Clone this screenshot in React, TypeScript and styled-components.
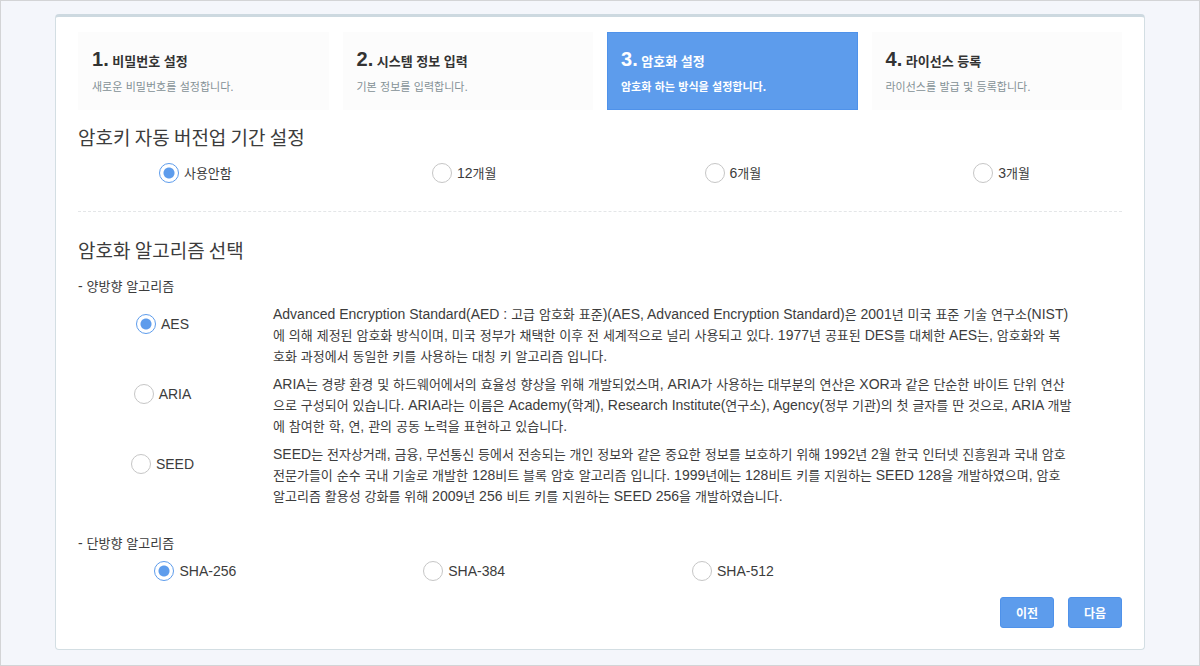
import React, { useState } from "react";
import styled, { createGlobalStyle } from "styled-components";

const GlobalStyle = createGlobalStyle`
  *, *::before, *::after { box-sizing: border-box; }
  body {
    margin: 0;
    background: #f4f6fb;
    color: #3c3c3c;
    font-family: "Liberation Sans", "Noto Sans CJK KR", sans-serif;
    font-size: 14px;
    line-height: 20px;
  }
`;

const Page = styled.main`
  min-height: 100vh;
  padding: 13px 54px 15px;
  border: 1px solid #d3d4d6;
`;

const Card = styled.form`
  padding: 15px 0 21px;
  background: #fff;
  border: 1px solid #d3dee3;
  border-top: 3px solid #cdd9e0;
  border-radius: 4px;
`;

const Steps = styled.ol`
  display: grid;
  grid-template-columns: repeat(4, 1fr);
  gap: 14px;
  margin: 0 0 13px;
  padding: 0 22px;
  list-style: none;
`;

const Step = styled.li<{ $active?: boolean }>`
  height: 78px;
  padding: 14px 13px 0;
  border: 1px solid ${(p) => (p.$active ? "#4f92ea" : "#fcfcfc")};
  background: ${(p) => (p.$active ? "#5d9cec" : "#fcfcfc")};
  color: ${(p) => (p.$active ? "#fff" : "#333")};
`;

const StepTitle = styled.h2`
  margin: 0 0 3px;
  font-size: 13px;
  line-height: 24px;
  font-weight: 700;
`;

const StepNumber = styled.span`
  font-size: 20px;
`;

const StepText = styled.p<{ $active?: boolean }>`
  margin: 0;
  font-size: 12px;
  font-weight: ${(p) => (p.$active ? 700 : 400)};
  color: ${(p) => (p.$active ? "#fff" : "#849196")};
`;

const Hangul = styled.span<{ $size: number }>`
  font-size: ${(p) => p.$size}px;
  line-height: 1;
`;

const SectionTitle = styled.h3`
  margin: 0 22px 12px;
  font-family: "Noto Sans CJK KR", sans-serif;
  font-size: 19px;
  line-height: 28px;
  font-weight: 400;
`;

const SubTitle = styled.h4`
  margin: 0 22px 8px;
  font-weight: 400;
`;

const Divider = styled.hr`
  margin: 28px 22px 24px;
  border: 0;
  border-top: 1px dashed #e4e6e8;
`;

const RadioRow = styled.div`
  display: grid;
  grid-template-columns: repeat(4, 1fr);
  justify-items: center;
  padding: 0 8px 0 5px;
`;

const RadioLabel = styled.label`
  display: flex;
  align-items: center;
  gap: 5px;
  height: 20px;
  white-space: nowrap;
  cursor: pointer;
`;

const RadioInput = styled.input`
  appearance: none;
  width: 20px;
  height: 20px;
  margin: 0;
  border: 1px solid #c6c6c6;
  border-radius: 50%;
  background: #fff;

  &:checked {
    border-color: #5d9cec;
    background: radial-gradient(circle, #5d9cec 5px, #fff 6px);
  }
`;

const Algorithms = styled.div`
  display: grid;
  gap: 7px;
  margin-bottom: 26px;
  padding: 0 22px 0 5px;
`;

const Algorithm = styled.div`
  display: grid;
  grid-template-columns: 203px 1fr;
  column-gap: 9px;
  justify-items: center;
`;

const AlgorithmChoice = styled.div`
  padding-top: 10px;
`;

const Description = styled.p`
  justify-self: stretch;
  margin: 0;
  line-height: 21px;
  white-space: pre-line;
`;

const Actions = styled.div`
  display: flex;
  justify-content: flex-end;
  gap: 14px;
  margin-top: 16px;
  padding: 0 22px;
`;

const Button = styled.button`
  width: 54px;
  height: 31px;
  padding: 0;
  border: 1px solid #4f92ea;
  border-radius: 3px;
  background: #5d9cec;
  color: #fff;
  font-family: inherit;
  font-size: 12px;
  font-weight: 700;
  cursor: pointer;
`;

/* Sets Hangul one step smaller than the Latin letters beside it. */
const Mixed = ({ text, size = 13 }: { text: string; size?: number }) => (
  <>
    {text.split(/([가-힣]+)/).map((run, i) =>
      i % 2 ? (
        <Hangul key={i} $size={size}>
          {run}
        </Hangul>
      ) : (
        run
      ),
    )}
  </>
);

const steps = [
  { title: "비밀번호 설정", text: "새로운 비밀번호를 설정합니다." },
  { title: "시스템 정보 입력", text: "기본 정보를 입력합니다." },
  { title: "암호화 설정", text: "암호화 하는 방식을 설정합니다." },
  { title: "라이선스 등록", text: "라이선스를 발급 및 등록합니다." },
];

const periods = ["사용안함", "12개월", "6개월", "3개월"];
const hashes = ["SHA-256", "SHA-384", "SHA-512"];

const ciphers = [
  {
    name: "AES",
    text: `Advanced Encryption Standard(AED : 고급 암호화 표준)(AES, Advanced Encryption Standard)은 2001년 미국 표준 기술 연구소(NIST)
에 의해 제정된 암호화 방식이며, 미국 정부가 채택한 이후 전 세계적으로 널리 사용되고 있다. 1977년 공표된 DES를 대체한 AES는, 암호화와 복
호화 과정에서 동일한 키를 사용하는 대칭 키 알고리즘 입니다.`,
  },
  {
    name: "ARIA",
    text: `ARIA는 경량 환경 및 하드웨어에서의 효율성 향상을 위해 개발되었스며, ARIA가 사용하는 대부분의 연산은 XOR과 같은 단순한 바이트 단위 연산
으로 구성되어 있습니다. ARIA라는 이름은 Academy(학계), Research Institute(연구소), Agency(정부 기관)의 첫 글자를 딴 것으로, ARIA 개발
에 참여한 학, 연, 관의 공동 노력을 표현하고 있습니다.`,
  },
  {
    name: "SEED",
    text: `SEED는 전자상거래, 금융, 무선통신 등에서 전송되는 개인 정보와 같은 중요한 정보를 보호하기 위해 1992년 2월 한국 인터넷 진흥원과 국내 암호
전문가들이 순수 국내 기술로 개발한 128비트 블록 암호 알고리즘 입니다. 1999년에는 128비트 키를 지원하는 SEED 128을 개발하였으며, 암호
알고리즘 활용성 강화를 위해 2009년 256 비트 키를 지원하는 SEED 256을 개발하였습니다.`,
  },
];

type RadioProps = {
  group: string;
  label: string;
  value: string;
  onSelect: (value: string) => void;
};

const Radio = ({ group, label, value, onSelect }: RadioProps) => (
  <RadioLabel>
    <RadioInput
      type="radio"
      name={group}
      value={label}
      checked={value === label}
      onChange={() => onSelect(label)}
    />
    <span>
      <Mixed text={label} />
    </span>
  </RadioLabel>
);

export default function App() {
  const [period, setPeriod] = useState("사용안함");
  const [cipher, setCipher] = useState("AES");
  const [hash, setHash] = useState("SHA-256");

  return (
    <Page>
      <GlobalStyle />
      <Card onSubmit={(e) => e.preventDefault()}>
        <Steps>
          {steps.map((step, i) => (
            <Step key={step.title} $active={i === 2} aria-current={i === 2 ? "step" : undefined}>
              <StepTitle>
                <StepNumber>{i + 1}.</StepNumber> {step.title}
              </StepTitle>
              <StepText $active={i === 2}>
                <Mixed text={step.text} size={11} />
              </StepText>
            </Step>
          ))}
        </Steps>

        <SectionTitle id="period">암호키 자동 버전업 기간 설정</SectionTitle>
        <RadioRow role="radiogroup" aria-labelledby="period">
          {periods.map((p) => (
            <Radio key={p} group="period" label={p} value={period} onSelect={setPeriod} />
          ))}
        </RadioRow>

        <Divider />

        <SectionTitle>암호화 알고리즘 선택</SectionTitle>
        <SubTitle id="cipher">
          <Mixed text="- 양방향 알고리즘" />
        </SubTitle>
        <Algorithms role="radiogroup" aria-labelledby="cipher">
          {ciphers.map((c) => (
            <Algorithm key={c.name}>
              <AlgorithmChoice>
                <Radio group="cipher" label={c.name} value={cipher} onSelect={setCipher} />
              </AlgorithmChoice>
              <Description>
                <Mixed text={c.text} />
              </Description>
            </Algorithm>
          ))}
        </Algorithms>

        <SubTitle id="hash">
          <Mixed text="- 단방향 알고리즘" />
        </SubTitle>
        <RadioRow role="radiogroup" aria-labelledby="hash">
          {hashes.map((h) => (
            <Radio key={h} group="hash" label={h} value={hash} onSelect={setHash} />
          ))}
        </RadioRow>

        <Actions>
          <Button type="button">이전</Button>
          <Button type="submit">다음</Button>
        </Actions>
      </Card>
    </Page>
  );
}
